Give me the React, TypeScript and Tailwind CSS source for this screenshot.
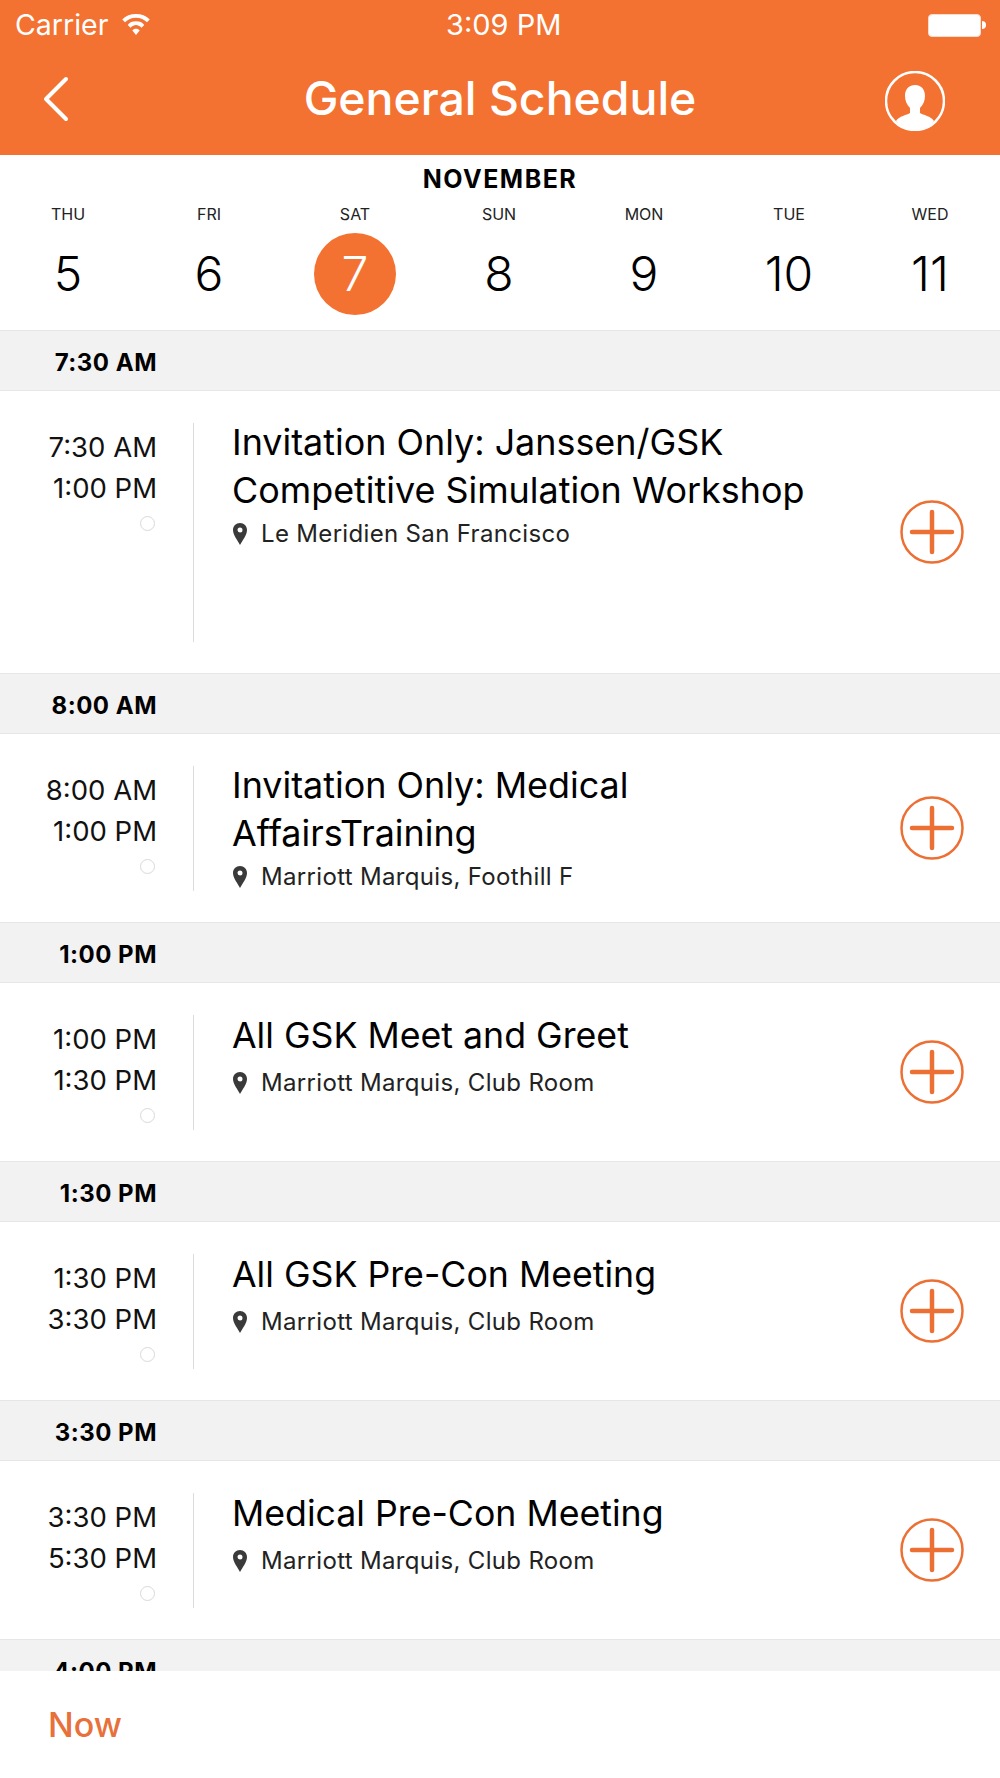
import React from 'react'

const days = [
  { name: 'THU', num: '5' },
  { name: 'FRI', num: '6' },
  { name: 'SAT', num: '7', active: true },
  { name: 'SUN', num: '8' },
  { name: 'MON', num: '9' },
  { name: 'TUE', num: '10' },
  { name: 'WED', num: '11' },
]

const events = [
  {
    label: '7:30 AM',
    start: '7:30 AM',
    end: '1:00 PM',
    title: ['Invitation Only: Janssen/GSK', 'Competitive Simulation Workshop'],
    place: 'Le Meridien San Francisco',
    height: 'h-[219px]',
  },
  {
    label: '8:00 AM',
    start: '8:00 AM',
    end: '1:00 PM',
    title: ['Invitation Only: Medical', 'AffairsTraining'],
    place: 'Marriott Marquis, Foothill F',
    height: 'h-[125px]',
  },
  {
    label: '1:00 PM',
    start: '1:00 PM',
    end: '1:30 PM',
    title: ['All GSK Meet and Greet'],
    place: 'Marriott Marquis, Club Room',
    height: 'h-[115px]',
  },
  {
    label: '1:30 PM',
    start: '1:30 PM',
    end: '3:30 PM',
    title: ['All GSK Pre-Con Meeting'],
    place: 'Marriott Marquis, Club Room',
    height: 'h-[115px]',
  },
  {
    label: '3:30 PM',
    start: '3:30 PM',
    end: '5:30 PM',
    title: ['Medical Pre-Con Meeting'],
    place: 'Marriott Marquis, Club Room',
    height: 'h-[115px]',
  },
]

const SectionBar = ({ label }: { label: string }) => (
  <div className="h-[61px] shrink-0 bg-[#f2f2f2] border-b border-[#e6e6e6] shadow-[inset_0_1px_0_#e6e6e6] flex items-center justify-end pr-[843px] pt-[6px]">
    <span className="text-[24px] font-bold tracking-[0.5px] text-black">{label}</span>
  </div>
)

const PlusIcon = () => (
  <svg width="64" height="64" viewBox="0 0 64 64" fill="none" stroke="#ec7034" className="-mt-[2px]">
    <circle cx="32" cy="32" r="30.5" strokeWidth="2.5" />
    <path d="M12 32H52M32 12V52" strokeWidth="4.500" strokeLinecap="round" />
  </svg>
)

const Pin = () => (
  <svg width="14" height="22" viewBox="0 0 14 22" className="ml-[1px]">
    <path
      fillRule="evenodd"
      fill="#3a3a3a"
      d="M7 0C3 0 0 3 0 7c0 5 5 11 7 15 2-4 7-10 7-15 0-4-3-7-7-7zm0 4.500a2.500 2.500 0 1 1 0 5 2.500 2.500 0 0 1 0-5z"
    />
  </svg>
)

const EventRow = ({ event }: { event: (typeof events)[number] }) => {
  const twoLines = event.title.length > 1
  return (
    <div className="bg-white pt-[32px] pb-[31px] flex shrink-0">
      <div className={`w-[157px] shrink-0 flex flex-col items-end pt-[4px] text-[27.500px] leading-[41px] text-[#111] ${event.height}`}>
        <div>{event.start}</div>
        <div>{event.end}</div>
        <div className="w-[15px] h-[15px] rounded-full border-[1.5px] border-[#d9d9d9] mt-[7px] mr-[2px]" />
      </div>
      <div className={`ml-[36px] border-l border-[#dcdcdc] pl-[38px] flex-1 ${event.height}`}>
        <div className={`leading-[48px] text-black ${twoLines ? 'text-[35.900px] -mt-[5px]' : 'text-[35.700px] -mt-[4px]'}`}>
          {event.title.map((t) => (
            <div key={t}>{t}</div>
          ))}
        </div>
        <div
          className={`flex items-center gap-[14px] text-[24px] leading-[36px] tracking-[0.33px] text-[#222] ${
            twoLines ? 'mt-[2px]' : 'mt-[6px]'
          }`}
        >
          <Pin />
          <span>{event.place}</span>
        </div>
      </div>
      <div className="w-[100px] shrink-0 flex items-center -my-[32px]">
        <PlusIcon />
      </div>
    </div>
  )
}

export default function App() {
  return (
    <div className="w-[1000px] h-[1778px] flex flex-col overflow-hidden bg-white font-['Inter',sans-serif]">
      <header className="h-[155px] shrink-0 bg-[#f37231] text-white">
        <div className="h-[50px] flex items-center pl-[15px] pr-[14px] text-[29px]">
          <div className="flex items-center gap-[13px] w-[431px]">
            <span className="text-[28.500px]">Carrier</span>
            <svg width="30" height="22" viewBox="0 0 30 24" fill="#fff">
              <path d="M15 0C9 0 4 2 0 6l3 3c3-3 7-5 12-5s9 2 12 5l3-3c-4-4-9-6-15-6z" />
              <path d="M15 8c-4 0-7 1-9 4l3 3c2-2 4-3 6-3s4 1 6 3l3-3c-2-3-5-4-9-4z" />
              <path d="M15 16c-2 0-3 .5-4 2l4 5 4-5c-1-1.500-2-2-4-2z" />
            </svg>
          </div>
          <span>3:09 PM</span>
          <div className="flex-1 flex justify-end items-center">
            <div className="w-[53px] h-[23px] rounded-[4px] bg-white border border-[#fbdccb]" />
            <div className="w-[4px] h-[8px] rounded-r-full bg-white ml-[1px]" />
          </div>
        </div>
        <div className="h-[105px] flex items-center px-[55px]">
          <div className="flex-1">
            <svg width="30" height="48" viewBox="0 0 30 48" fill="none" stroke="#fff" strokeWidth="4" strokeLinecap="round" strokeLinejoin="round" className="-mt-[8px] -ml-[15px]">
              <path d="M26 4L6 24l20 20" />
            </svg>
          </div>
          <h1 className="text-[46.400px] font-medium -mt-[8px]">General Schedule</h1>
          <div className="flex-1 flex justify-end">
            <svg width="60" height="60" viewBox="0 0 60 60" className="-mt-[3px]">
              <circle cx="30" cy="30" r="29" fill="none" stroke="#fff" strokeWidth="2.500" />
              <path
                fill="#fff"
                d="M30 14c-7 0-10 5-10 11 0 5 2 9 5 12v5c-3 2-11 3-14 8 5 6 12 9 19 9s14-3 19-9c-3-5-11-6-14-8v-5c3-3 5-7 5-12 0-6-3-11-10-11z"
              />
            </svg>
          </div>
        </div>
      </header>

      <section className="h-[175px] shrink-0 bg-white text-black">
        <div className="text-center text-[25px] font-bold tracking-[1.5px] leading-[30px] pt-[9px] h-[45px]">NOVEMBER</div>
        <div className="grid grid-cols-[136px_146px_146px_142px_148px_142px_140px]">
          {days.map((d) => (
            <div key={d.name} className="flex flex-col items-center">
              <span className="text-[16px] leading-[28px] text-[#222]">{d.name}</span>
              <span
                className={
                  d.active
                    ? 'mt-[5px] w-[82px] h-[82px] rounded-full bg-[#f37231] text-white flex items-center justify-center text-[48px] font-[350]'
                    : 'mt-[5px] h-[82px] flex items-center justify-center text-[48px] font-[350]'
                }
              >
                {d.num}
              </span>
            </div>
          ))}
        </div>
      </section>

      <div className="flex-1 min-h-0 overflow-hidden flex flex-col">
        {events.map((e) => (
          <React.Fragment key={e.label}>
            <SectionBar label={e.label} />
            <EventRow event={e} />
          </React.Fragment>
        ))}
        <SectionBar label="4:00 PM" />
      </div>

      <footer className="h-[107px] shrink-0 bg-white flex items-center pl-[48px]">
        <span className="text-[34px] text-[#e8703a] font-medium">Now</span>
      </footer>
    </div>
  )
}
